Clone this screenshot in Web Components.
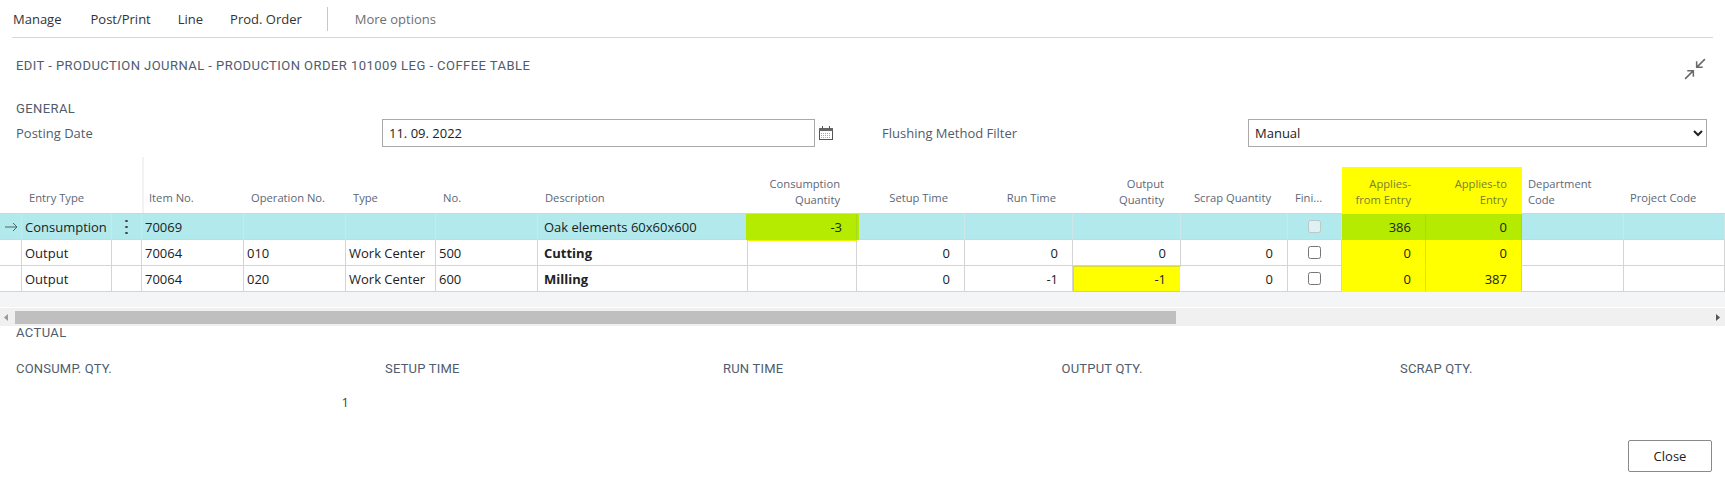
<!DOCTYPE html>
<html>
<head>
<meta charset="utf-8">
<title>Production Journal</title>
<style>
html,body{margin:0;padding:0;background:#fff;height:485px;overflow:hidden}
body{font-family:"Open Sans","Noto Sans",sans-serif;font-size:13px;color:#212121}
</style>
</head>
<body>
<journal-page></journal-page>

<script>
//top menu with the separator
class ActionBar extends HTMLElement{
    constructor() {
        super();
        this.attachShadow({mode:'open'});
        this.shadowRoot.innerHTML = `
<style>
:host{display:flex;align-items:center;height:37px;margin:0 12px;border-bottom:1px solid #d8d8d8;font-size:13px;color:#333}
span{display:block;margin-left:1px;margin-right:26px;white-space:nowrap}
span:first-of-type{margin-right:28px}
i{display:block;width:1px;height:24px;background:#c8c8c8;margin:0 26px 0 -1px}
.more{color:#6f6f6f}
</style>
<span>Manage</span><span>Post/Print</span><span>Line</span><span>Prod. Order</span><i></i><span class="more">More options</span>`;
    }
}
customElements.define('action-bar', ActionBar);

//page caption and the collapse icon
class PageTitle extends HTMLElement{
    constructor() {
        super();
        this.attachShadow({mode:'open'});
        this.shadowRoot.innerHTML = `
<style>
:host{display:flex;justify-content:space-between;align-items:flex-start;padding:19px 19px 0 16px;height:63px;box-sizing:border-box}
h1{margin:0;font:400 13px/17px Roboto,sans-serif;letter-spacing:.45px;color:#505c6d;white-space:nowrap}
svg{display:block;margin-top:1px}
</style>
<h1><slot></slot></h1>
<svg width="22" height="22" viewBox="0 0 20 20" fill="none" stroke="#6a6a6a" stroke-width="1.4"><path d="M19 1L11.5 8.5M11.5 3V8.5H17"/><path d="M1 19L8.5 11.5M3 11.5H8.5V17"/></svg>`;
    }
}
customElements.define('page-title', PageTitle);

//section heading
class SectionHead extends HTMLElement{
    constructor() {
        super();
        this.attachShadow({mode:'open'});
        this.shadowRoot.innerHTML = `
<style>
:host{display:block;padding-left:16px;font:400 13px/17px Roboto,sans-serif;letter-spacing:.4px;color:#505c6d}
:host(.actual){line-height:14px}
</style>
<slot></slot>`;
    }
}
customElements.define('section-head', SectionHead);

//Posting date / flushing method row
class GeneralFields extends HTMLElement{
    constructor() {
        super();
        this.attachShadow({mode:'open'});
        this.shadowRoot.innerHTML = `
<style>
:host{display:grid;grid-template-columns:366px 433px 67px 366px 459px;align-items:center;height:28px;padding-left:16px;font-size:13px;color:#505c6d;margin-top:2px}
.box{box-sizing:border-box;height:28px;border:1px solid #a9a9a9;padding:0 6px;line-height:26px;color:#212121;white-space:nowrap}
svg{display:block;margin-left:3px}
select{box-sizing:border-box;width:459px;height:28px;border:1px solid #a9a9a9;border-radius:0;background:#fff;font:13px "Open Sans",sans-serif;color:#212121;padding:0 2px;outline:0}
</style>
<span>Posting Date</span>
<div class="box">11. 09. 2022</div>
<svg width="16" height="15" viewBox="0 0 16 15"><rect x="1.5" y="2.5" width="13" height="11" fill="#fff" stroke="#555"/><rect x="1" y="2" width="14" height="3" fill="#666"/><path d="M4.5 0v3M11.5 0v3" stroke="#555"/><path d="M3 7.5h10M3 9.5h10M3 11.5h10" stroke="#aaa" stroke-dasharray="1 1"/></svg>
<span>Flushing Method Filter</span>
<select><option>Manual</option></select>`;
    }
}
customElements.define('general-fields', GeneralFields);

const COLS = [
    ['Entry Type','l',7],['','l',0],['Item No.','l',7],['Operation No.','l',7],['Type','l',7],['No.','l',7],['Description','l',7],
    ['Consumption<br>Quantity','r',17],['Setup Time','r',17],['Run Time','r',17],['Output<br>Quantity','r',17],['Scrap Quantity','r',17],
    ['Fini...','l',7],['Applies-<br>from Entry','r',15],['Applies-to<br>Entry','r',15],['Department<br>Code','l',6],['Project Code','l',6]
];
const ROWS = [
    {cur:true, cells:['Consumption','','70069','','','','Oak elements 60x60x600','-3','','','','','chk','386','0','','']},
    {cells:['Output','','70064','010','Work Center','500','*Cutting','','0','0','0','0','chk','0','0','','']},
    {cells:['Output','','70064','020','Work Center','600','*Milling','','0','-1','-1','0','chk','0','387','','']}
];

//the journal table
class JournalGrid extends HTMLElement{
    constructor() {
        super();
        this.attachShadow({mode:'open'});
        let head = '<div class="hc"></div>' + COLS.map((c,i)=>{
            let cls = 'hc ' + c[1] + (i==13||i==14 ? ' hi' : '') + (i==2 ? ' rs' : '');
            let pb = c[0].includes('<br>') ? 5 : 7;
            return `<div class="${cls}" style="padding-bottom:${pb}px;padding-${c[1]=='r'?'right':'left'}:${c[2]}px">${c[0]?`<span>${c[0]}</span>`:''}</div>`;
        }).join('');
        let body = ROWS.map((r,ri)=>{
            let out = `<div class="c first${r.cur?' cur':''}">${r.cur?'<svg width="13" height="10" viewBox="0 0 13 10" fill="none" stroke="#4a6468"><path d="M0 5h12M8 1l4 4-4 4"/></svg>':''}</div>`;
            r.cells.forEach((t,i)=>{
                let cls = 'c ' + COLS[i][1];
                if(r.cur) cls += ' cur';
                if(i==6) cls += ' desc';
                if(i==13||i==14) cls += r.cur ? ' green' : ' hi';
                if(r.cur&&i==7) cls += ' green under';
                if(ri==2&&i==10) cls += ' hi mark';
                let inner = t;
                if(t=='chk') inner = `<input type="checkbox"${r.cur?' disabled':''}>`, cls += ' mid';
                else if(t[0]=='*') inner = `<b>${t.slice(1)}</b>`;
                if(r.cur&&i==1) inner = '<em></em>', cls += ' mid';
                out += `<div class="${cls}">${inner}</div>`;
            });
            return out;
        }).join('');
        this.shadowRoot.innerHTML = `
<style>
:host{display:block;height:160px;background:#f4f5f7;font-size:13px;color:#212121;overflow:hidden}
.g{display:grid;grid-template-columns:22px 90px 30px 102px 102px 90px 102px 210px 109px 108px 108px 108px 107px 54px 84px 96px 102px 101px;grid-template-rows:67px repeat(3,26px);background:#fff}
.hc{box-sizing:border-box;font-size:11.2px;line-height:16px;color:#5d6775;display:flex;align-items:flex-end;border-bottom:1px solid #d4d4d4;white-space:nowrap}
.hc.r{justify-content:flex-end;text-align:right}
.hc.rs{background:linear-gradient(#f2f2f2,#f2f2f2) 0 10px/2px 100% no-repeat}
.hc.hi{background:linear-gradient(transparent 20px,#ff0 20px);color:#7a8030;border-bottom-color:#ff0}
.c{box-sizing:border-box;height:26px;line-height:27px;padding:0 3px;border-right:1px solid #d4d4d4;border-bottom:1px solid #d4d4d4;white-space:nowrap;background:#fff}
.c.desc{padding-left:6px}
.c.r{text-align:right;padding-right:14px}
.c.mid{display:flex;align-items:center;justify-content:center}
.c.first{padding:0 0 0 5px;display:flex;align-items:center}
.c.cur{background:#b2e9ec;border-right-color:#cfe6e8;border-bottom-color:#d4d4d4}
.c.hi{background:#ff0;border-right-color:#dcdc30;border-bottom-color:#ff0}
.c.mark{border-top:1px solid #dcdc30;border-left:1px solid #dcdc30;border-bottom-color:#dcdc30;border-right-color:#fff;line-height:25px}
.c.green{background:#b4eb00;border-right-color:#a5d820;border-bottom-color:#b4eb00}
.under{position:relative;z-index:1;border-right-color:#b4eb00;box-shadow:-2px 0 0 #b4eb00,2px 0 0 #b4eb00,0 1px 0 #ecf200}
input{margin:0;width:13px;height:13px}
em{display:block;width:3px;height:18px;background:radial-gradient(circle,#444 1px,transparent 1.4px) 0 0/3px 6px}
b{font-weight:700}
</style>
<div class="g">${head}${body}</div>`;
    }
}
customElements.define('journal-grid', JournalGrid);

//horizontal scrollbar under the grid
class HScroll extends HTMLElement{
    constructor() {
        super();
        this.attachShadow({mode:'open'});
        this.shadowRoot.innerHTML = `
<style>
:host{display:flex;align-items:center;box-sizing:border-box;height:19px;background:#f0f0f0;border-top:1px solid #fff}
.a{width:14px;display:flex;justify-content:center;flex:none}
.l{width:15px;justify-content:flex-start;padding-left:4px;box-sizing:border-box}
.t{flex:1;height:13px}
.t div{height:13px;width:1161px;background:#bfbfbf}
svg{display:block}
</style>
<div class="a l"><svg width="4" height="7"><path d="M4 0v7L0 3.5z" fill="#999"/></svg></div>
<div class="t"><div></div></div>
<div class="a"><svg width="4" height="7"><path d="M0 0v7L4 3.5z" fill="#555"/></svg></div>`;
    }
}
customElements.define('h-scroll', HScroll);

//Actual totals
class ActualTotals extends HTMLElement{
    constructor() {
        super();
        this.attachShadow({mode:'open'});
        this.shadowRoot.innerHTML = `
<style>
:host{display:grid;grid-template-columns:369px 338px 338.5px 338.5px 1fr;padding-left:16px;margin-top:20px;font:400 13px/17px Roboto,sans-serif;letter-spacing:.2px;color:#505c6d}
.v{font:13px/17px "Open Sans",sans-serif;color:#444;letter-spacing:0;grid-column:1;text-align:right;padding-right:36px;margin-top:17px}
</style>
<span>CONSUMP. QTY.</span><span>SETUP TIME</span><span>RUN TIME</span><span>OUTPUT QTY.</span><span>SCRAP QTY.</span>
<div class="v">1</div>`;
    }
}
customElements.define('actual-totals', ActualTotals);

class DialogFooter extends HTMLElement{
    constructor() {
        super();
        this.attachShadow({mode:'open'});
        this.shadowRoot.innerHTML = `
<style>
:host{display:flex;justify-content:flex-end;padding:0 13px 0 0;margin-top:29px}
button{width:84px;height:32px;background:#fff;border:1px solid #8a8a8a;border-radius:2px;font:13px "Open Sans",sans-serif;color:#212121;padding:0}
</style>
<button><slot></slot></button>`;
    }
}
customElements.define('dialog-footer', DialogFooter);

//whole dialog
class JournalPage extends HTMLElement{
    constructor() {
        super();
        this.attachShadow({mode:'open'});
        this.shadowRoot.innerHTML = `
<style>
:host{display:block;height:485px;overflow:hidden}
</style>
<action-bar></action-bar>
<page-title>EDIT - PRODUCTION JOURNAL - PRODUCTION ORDER 101009 LEG - COFFEE TABLE</page-title>
<section-head style="line-height:16px">GENERAL</section-head>
<general-fields></general-fields>
<journal-grid></journal-grid>
<h-scroll></h-scroll>
<section-head class="actual">ACTUAL</section-head>
<actual-totals></actual-totals>
<dialog-footer>Close</dialog-footer>`;
    }
}
customElements.define('journal-page', JournalPage);
</script>
</body>
</html>
